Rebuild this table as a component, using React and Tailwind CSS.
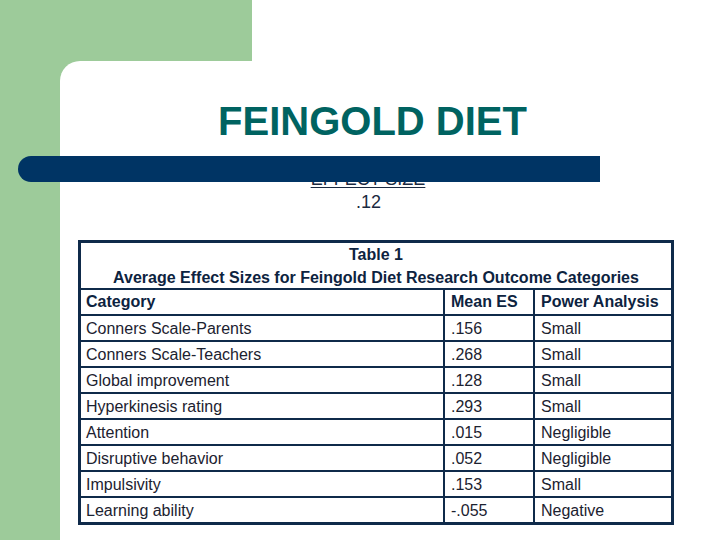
const rows = [
  ['Conners Scale-Parents', '.156', 'Small'],
  ['Conners Scale-Teachers', '.268', 'Small'],
  ['Global improvement', '.128', 'Small'],
  ['Hyperkinesis rating', '.293', 'Small'],
  ['Attention', '.015', 'Negligible'],
  ['Disruptive behavior', '.052', 'Negligible'],
  ['Impulsivity', '.153', 'Small'],
  ['Learning ability', '-.055', 'Negative'],
];

function App() {
  return (
    <div
      className="relative w-[720px] h-[540px] overflow-hidden bg-[#9dcb9a] flex flex-col"
      style={{ fontFamily: '"Liberation Sans", Arial, sans-serif' }}
    >
      {/* top green band */}
      <div className="h-[61px] flex">
        <div className="w-[252px]"></div>
        <div className="flex-1 bg-white"></div>
      </div>

      <div className="flex-1 flex">
        <div className="w-[60px]"></div>
        <div className="flex-1 bg-white rounded-tl-[20px] flex flex-col pr-[35px]">
          <h1 className="pt-[40px] text-center text-[40px] leading-none font-bold text-[#006361]">
            FEINGOLD DIET
          </h1>

          <div className="mt-[29px] text-center text-[18px] leading-none text-[#1a2940] pr-[9px]">
            <span className="underline underline-offset-2">EFFECT SIZE</span>
          </div>
          <div className="mt-[5px] text-center text-[18px] leading-none text-[#1a2940] pr-[8px]">
            .12
          </div>

          {/* table */}
          <div className="mt-[29px] ml-[18px] w-[596px] border-[3px] border-[#0f2a4a] text-[16px]">
            <div className="h-[45px] flex flex-col items-center justify-center font-bold text-[16px] leading-[23px] text-[#0d2340]">
              <div>Table 1</div>
              <div>Average Effect Sizes for Feingold Diet Research Outcome Categories</div>
            </div>
            <div className="flex h-[26px] border-t-2 border-[#0f2a4a] font-bold text-[#0d2340]">
              <div className="w-[362px] pl-[5px] flex items-center">Category</div>
              <div className="w-[90px] pl-[6px] border-l-2 border-[#0f2a4a] flex items-center">Mean ES</div>
              <div className="flex-1 pl-[6px] border-l-2 border-[#0f2a4a] flex items-center">Power Analysis</div>
            </div>
            {rows.map((r) => (
              <div key={r[0]} className="flex h-[26px] border-t-2 border-[#0f2a4a] text-[#1c2230]">
                <div className="w-[362px] pl-[5px] pt-[2px] flex items-center">{r[0]}</div>
                <div className="w-[90px] pl-[6px] pt-[2px] border-l-2 border-[#0f2a4a] flex items-center">{r[1]}</div>
                <div className="flex-1 pl-[6px] pt-[2px] border-l-2 border-[#0f2a4a] flex items-center">{r[2]}</div>
              </div>
            ))}
          </div>
        </div>
      </div>

      {/* dark bar lying over the title area */}
      <div className="absolute left-[18px] top-[156px] w-[582px] h-[26px] rounded-l-full bg-[#003464]"></div>
    </div>
  );
}

export default App;
